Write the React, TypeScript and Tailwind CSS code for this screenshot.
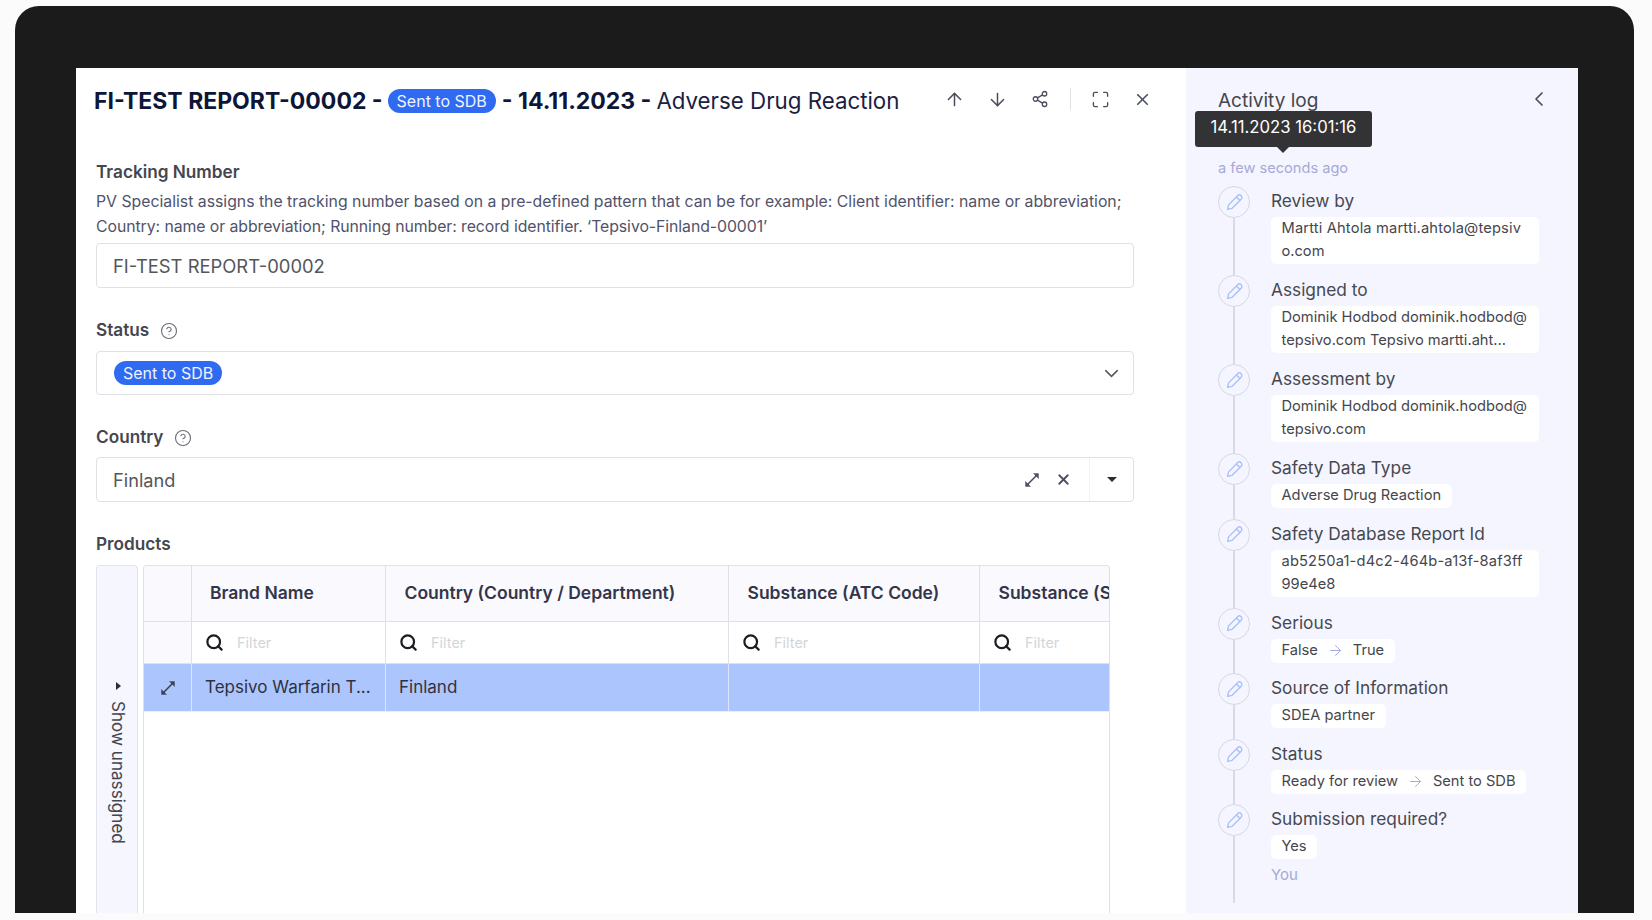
import React from "react";
import { ArrowUp, ArrowDown, Share2, Maximize, X, ChevronLeft, ChevronDown, CircleHelp, Search, ArrowRight } from "lucide-react";

function PencilIcon() {
  return (
    <svg width="19" height="19" viewBox="0 0 16 16" fill="none" stroke="#a9c0fb" strokeWidth="1.15" strokeLinejoin="round">
      <path d="M2.2 13.8 L3 10 L10.6 2.3 A1.6 1.6 0 0 1 13.6 5.2 L6 12.9 Z" />
      <path d="M9.6 3.4 L12.6 6.3" />
    </svg>
  );
}

function ExpandDiag({ color, size = 18 }: { color: string; size?: number }) {
  return (
    <svg width={size} height={size} viewBox="0 0 18 18" fill={color} stroke={color} strokeWidth="1.6">
      <path d="M4.5 13.5 L13.5 4.5" />
      <path d="M10.5 2.5 L15.5 2.5 L15.5 7.5 Z" strokeWidth="0.4" />
      <path d="M2.5 10.5 L2.5 15.5 L7.5 15.5 Z" strokeWidth="0.4" />
    </svg>
  );
}

function Badge() {
  return <span className="inline-flex h-[24px] items-center justify-center rounded-full bg-[#2f6bf0] px-[9px] text-[16px] font-normal leading-none tracking-normal text-[#eef3ff]">Sent to SDB</span>;
}

function Label({ children, help }: { children: React.ReactNode; help?: boolean }) {
  return (
    <div className="flex h-[20px] items-center text-[17.2px] font-semibold text-[#44464f]">
      <span className="pb-[2px]">{children}</span>
      {help && <CircleHelp size={18} strokeWidth={1.5} className="ml-[11px] text-[#6b6d76]" />}
    </div>
  );
}

type Line = { text: string; wide?: boolean };
type Log = { title: string; body?: Line[]; pair?: [string, string]; single?: string };

const logs: Log[] = [
  { title: "Review by", body: [{ text: "Martti Ahtola martti.ahtola@tepsiv", wide: true }, { text: "o.com" }] },
  { title: "Assigned to", body: [{ text: "Dominik Hodbod dominik.hodbod@" }, { text: "tepsivo.com Tepsivo martti.aht..." }] },
  { title: "Assessment by", body: [{ text: "Dominik Hodbod dominik.hodbod@" }, { text: "tepsivo.com" }] },
  { title: "Safety Data Type", single: "Adverse Drug Reaction" },
  { title: "Safety Database Report Id", body: [{ text: "ab5250a1-d4c2-464b-a13f-8af3ff", wide: true }, { text: "99e4e8" }] },
  { title: "Serious", pair: ["False", "True"] },
  { title: "Source of Information", single: "SDEA partner" },
  { title: "Status", pair: ["Ready for review", "Sent to SDB"] },
  { title: "Submission required?", single: "Yes" },
];

const cardText = "rounded-[5px] bg-white px-[10.5px] pb-[1px] text-[14.65px] leading-[23px] text-[#45464d]";

function LogRow({ log, last }: { log: Log; last: boolean }) {
  const pad = last ? "pb-[17px]" : log.body ? "pb-[11px]" : "pb-[10.5px]";
  return (
    <div className="flex gap-[21px]">
      <div className="flex w-[32px] shrink-0 flex-col items-center">
        <div className="flex h-[32px] w-[32px] shrink-0 items-center justify-center rounded-full border border-[#d6d8e6] bg-[#f4f5ff]">
          <PencilIcon />
        </div>
        <div className="w-[1.5px] flex-1 bg-[#d8dae6]" />
      </div>
      <div className={`min-w-0 flex-1 ${pad}`}>
        <div className="flex h-[31px] items-center pb-[1px] text-[17.3px] leading-none text-[#47484f]">{log.title}</div>
        {log.body && (
          <div className={cardText}>
            {log.body.map((l) => (
              <div key={l.text} className={l.wide ? "whitespace-nowrap tracking-[0.17px]" : "whitespace-nowrap"}>{l.text}</div>
            ))}
          </div>
        )}
        {log.single && <div className={`flex w-fit ${cardText}`}>{log.single}</div>}
        {log.pair && (
          <div className={`flex w-fit items-center ${cardText}`}>
            {log.pair[0]}
            <ArrowRight size={17} strokeWidth={1.4} className="mx-[9px] text-[#a5a9d8]" />
            {log.pair[1]}
          </div>
        )}
        {last && <div className="mt-[4px] text-[15px] leading-[23px] text-[#a5a9d8]">You</div>}
      </div>
    </div>
  );
}

function FilterCell({ className }: { className: string }) {
  return (
    <div className={`flex items-center pl-[14px] ${className}`}>
      <Search size={19} strokeWidth={2.8} className="-ml-[1px] text-[#1c1c22]" />
      <span className="ml-[13px] text-[14.5px] text-[#d4d5d9]">Filter</span>
    </div>
  );
}

const col = "border-r border-[#dfe1e8]";
const rowCol = "border-r border-[#dfe6fb]";

export default function App() {
  return (
    <div className="h-[920px] w-[1652px] overflow-hidden bg-[#fbfbfc]" style={{ fontFamily: "Inter, 'Liberation Sans', sans-serif" }}>
      <div className="ml-[15px] mt-[6px] flex h-[907px] w-[1619px] flex-col rounded-t-[24px] bg-[#1b1b1b] pl-[61px] pr-[56px] pt-[62px]">
        <div className="flex min-h-0 flex-1">
          {/* main */}
          <div className="flex w-[1110px] shrink-0 flex-col bg-white">
            <div className="flex h-[62px] shrink-0 items-center pl-[18px] pr-[34px]">
              <h1 className="flex items-center whitespace-nowrap pt-[4px] text-[23px] font-bold text-[#0e1638]">
                FI-TEST REPORT-00002 -
                <span className="ml-[5px] mr-[6px] flex"><Badge /></span>
                - 14.11.2023 -
                <span className="ml-[5px] text-[22.3px] font-normal text-[#1a2140]">Adverse Drug Reaction</span>
              </h1>
              <div className="ml-auto flex items-center text-[#4a4d5e]">
                <ArrowUp size={21} strokeWidth={1.7} />
                <ArrowDown size={21} strokeWidth={1.7} className="ml-[22px]" />
                <Share2 size={18} strokeWidth={1.7} className="ml-[23px]" />
                <div className="ml-[21px] h-[22px] w-px bg-[#e2e3e8]" />
                <Maximize size={19} strokeWidth={1.7} className="ml-[20px]" />
                <X size={19} strokeWidth={2.1} className="ml-[23px]" />
              </div>
            </div>

            <div className="flex min-h-0 flex-1 flex-col pl-[20px] pr-[52px] pt-[33px]">
              <Label>Tracking Number</Label>
              <p className="mt-[6px] whitespace-nowrap text-[15.8px] leading-[25px] text-[#50536a]">
                PV Specialist assigns the tracking number based on a pre-defined pattern that can be for example: Client identifier: name or abbreviation;
                <br />
                <span className="tracking-[-0.055px]">Country: name or abbreviation; Running number: record identifier. ‘Tepsivo-Finland-00001’</span>
              </p>
              <div className="mt-[4px] flex h-[45px] shrink-0 items-center rounded-[4px] border border-[#dfe1e6] pl-[16px] pt-[2px] text-[18.4px] text-[#55565c]">FI-TEST REPORT-00002</div>

              <div className="mt-[33px]"><Label help>Status</Label></div>
              <div className="mt-[10px] flex h-[44px] shrink-0 items-center justify-between rounded-[4px] border border-[#dfe1e6] pl-[17px] pr-[10px]">
                <Badge />
                <ChevronDown size={23} strokeWidth={1.5} className="text-[#55565c]" />
              </div>

              <div className="mt-[33px]"><Label help>Country</Label></div>
              <div className="mt-[9px] flex h-[45px] shrink-0 items-center rounded-[4px] border border-[#dfe1e6] pl-[16px] text-[18.2px] text-[#55565c]">
                <span className="flex-1 pt-[2px]">Finland</span>
                <ExpandDiag color="#4a4d63" />
                <X size={17} strokeWidth={2.5} className="ml-[14px] text-[#4a4d63]" />
                <div className="ml-[17px] flex h-full w-[44px] items-center justify-center border-l border-[#f1f2f4]">
                  <span className="h-0 w-0 border-x-[5px] border-t-[5px] border-x-transparent border-t-[#2c2d35]" />
                </div>
              </div>

              <div className="mt-[33px]"><Label>Products</Label></div>
              <div className="mt-[10px] flex min-h-0 flex-1 gap-[5px] pr-[24px]">
                <div className="flex w-[42px] shrink-0 flex-col items-center rounded-t-[4px] border border-b-0 border-[#e2e3ec] bg-[#f5f6fe] pl-[2px] pt-[116px]">
                  <span className="h-0 w-0 border-y-[4.5px] border-l-[5px] border-y-transparent border-l-[#2c2d35]" />
                  <span className="mt-[11px] whitespace-nowrap text-[17.1px] text-[#44464f] [writing-mode:vertical-rl]">Show unassigned</span>
                </div>
                <div className="min-w-0 flex-1 overflow-hidden rounded-t-[4px] border border-b-0 border-[#dfe1e8]">
                  <div className="flex h-[56px] border-b border-[#dfe1e8] bg-[#f9f9fe] text-[17.5px] font-semibold text-[#33354a]">
                    <div className={`w-[48px] shrink-0 ${col}`} />
                    <div className={`flex w-[194px] shrink-0 items-center pl-[18px] ${col}`}>Brand Name</div>
                    <div className={`flex w-[343px] shrink-0 items-center pl-[18.5px] ${col}`}>Country (Country / Department)</div>
                    <div className={`flex w-[251px] shrink-0 items-center pl-[18.5px] ${col}`}>Substance (ATC Code)</div>
                    <div className="flex min-w-0 flex-1 items-center overflow-hidden whitespace-nowrap pl-[18.5px]">Substance (Substance)</div>
                  </div>
                  <div className="flex h-[42px] border-b border-[#dfe1e8]">
                    <div className={`w-[48px] shrink-0 bg-[#f9f9fe] ${col}`} />
                    <FilterCell className={`w-[194px] shrink-0 ${col}`} />
                    <FilterCell className={`w-[343px] shrink-0 ${col}`} />
                    <FilterCell className={`w-[251px] shrink-0 ${col}`} />
                    <FilterCell className="min-w-0 flex-1" />
                  </div>
                  <div className="flex h-[48px] border-b border-[#eceef6] bg-[#adc5fd] text-[17px] text-[#2f3140]">
                    <div className={`flex w-[48px] shrink-0 items-center justify-center ${rowCol}`}><ExpandDiag color="#3b4258" /></div>
                    <div className={`flex w-[194px] shrink-0 items-center pl-[13px] ${rowCol}`}>Tepsivo Warfarin T...</div>
                    <div className={`flex w-[343px] shrink-0 items-center pl-[13px] ${rowCol}`}>Finland</div>
                    <div className={`w-[251px] shrink-0 ${rowCol}`} />
                    <div className="flex-1" />
                  </div>
                </div>
              </div>
            </div>
          </div>

          {/* activity */}
          <aside className="relative flex min-w-0 flex-1 flex-col bg-[#f4f5ff] pl-[32px] pr-[39px]">
            <div className="flex h-[62px] shrink-0 items-center justify-between">
              <span className="pt-[4px] text-[19px] text-[#44464f]">Activity log</span>
              <ChevronLeft size={24} strokeWidth={1.7} className="-mr-[12px] text-[#4a4d5e]" />
            </div>
            <div className="absolute left-[9px] top-[43px] flex h-[36px] w-[177px] items-center justify-center rounded-[3px] bg-[#333335] pb-[2px] text-[16.7px] text-white">
              14.11.2023 16:01:16
              <span className="absolute -bottom-[6px] left-[82px] h-0 w-0 border-x-[6px] border-t-[6px] border-x-transparent border-t-[#333335]" />
            </div>
            <div className="mt-[29px] flex h-[20px] shrink-0 items-center text-[14.6px] text-[#a5a9d8]">a few seconds ago</div>
            <div className="mt-[7px] flex flex-col">
              {logs.map((l, i) => (
                <LogRow key={l.title} log={l} last={i === logs.length - 1} />
              ))}
            </div>
          </aside>
        </div>
      </div>
    </div>
  );
}
